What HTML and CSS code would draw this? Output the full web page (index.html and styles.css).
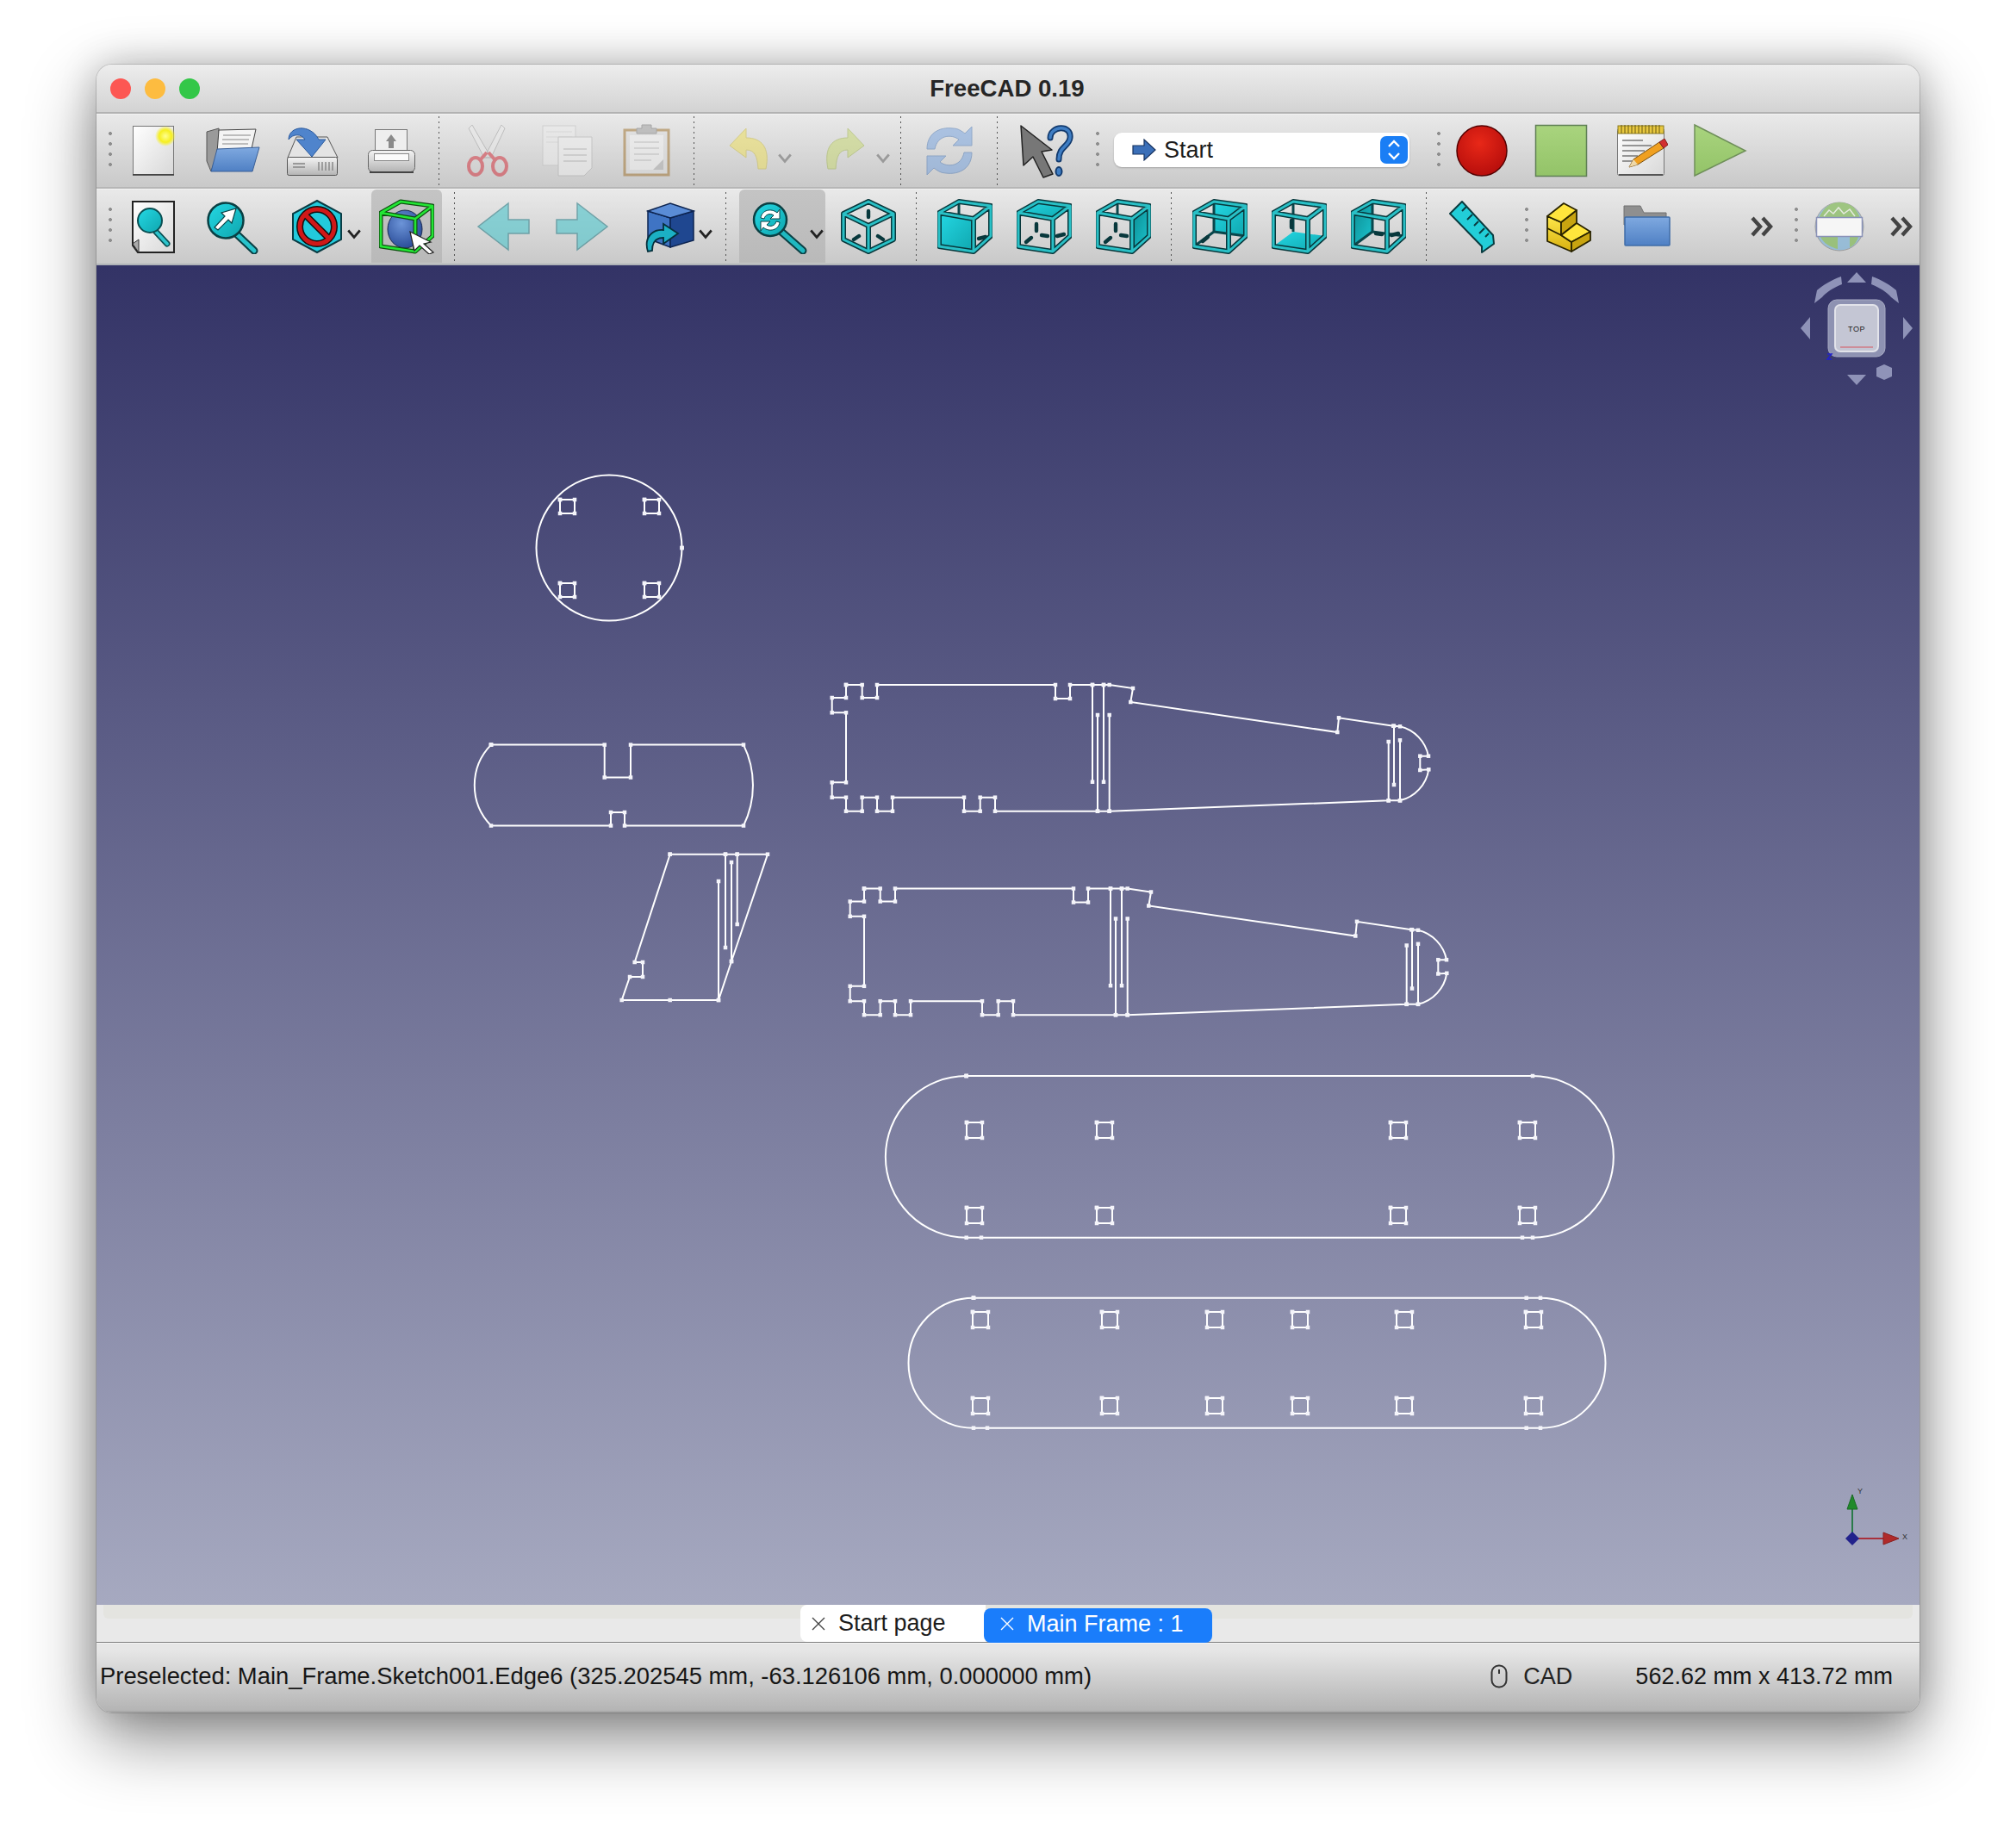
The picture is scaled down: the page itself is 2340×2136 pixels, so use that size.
FILE: index.html
```html
<!DOCTYPE html>
<html lang="en">
<head>
<meta charset="utf-8">
<title>FreeCAD 0.19</title>
<link rel="stylesheet" href="styles.css">
</head>
<body>
<svg class="defs" aria-hidden="true">
  <defs>
    <linearGradient id="gPage" x1="0" y1="0" x2="1" y2="1"><stop offset="0" stop-color="#fff"/><stop offset="1" stop-color="#d8d8d8"/></linearGradient>
    <radialGradient id="gGlow"><stop offset="0" stop-color="#ffff90"/><stop offset=".6" stop-color="#f6ef20"/><stop offset="1" stop-color="#f6ef20" stop-opacity="0"/></radialGradient>
    <linearGradient id="gBlue" x1="0" y1="0" x2="0" y2="1"><stop offset="0" stop-color="#7fa9e0"/><stop offset="1" stop-color="#4f80c4"/></linearGradient>
    <linearGradient id="gGrey" x1="0" y1="0" x2="0" y2="1"><stop offset="0" stop-color="#f4f4f4"/><stop offset="1" stop-color="#b4b4b4"/></linearGradient>
    <radialGradient id="gRed" cx=".45" cy=".35" r=".75"><stop offset="0" stop-color="#e82818"/><stop offset="1" stop-color="#b00a0a"/></radialGradient>
    <linearGradient id="gGreen" x1="0" y1="0" x2="0" y2="1"><stop offset="0" stop-color="#a9d47e"/><stop offset="1" stop-color="#93c368"/></linearGradient>
    <linearGradient id="gTeal" x1="0" y1="0" x2="1" y2="1"><stop offset="0" stop-color="#24d8e4"/><stop offset="1" stop-color="#0fa6ae"/></linearGradient>
    <linearGradient id="gTealD" x1="0" y1="0" x2="1" y2="1"><stop offset="0" stop-color="#0b8a90"/><stop offset="1" stop-color="#1cc6d0"/></linearGradient>
    <radialGradient id="gSphere" cx=".4" cy=".35" r=".8"><stop offset="0" stop-color="#6c94d8"/><stop offset="1" stop-color="#1e3f8c"/></radialGradient>
    <linearGradient id="gGold" x1="0" y1="0" x2="0" y2="1"><stop offset="0" stop-color="#ffe84a"/><stop offset="1" stop-color="#d8b010"/></linearGradient>

    <symbol id="new" viewBox="0 0 64 64">
      <rect x="8.5" y="3.5" width="47" height="56" fill="url(#gPage)" stroke="#777"/>
      <path d="M8 60h48" stroke="#333" stroke-width="1.5"/>
      <circle cx="46" cy="15" r="12" fill="url(#gGlow)"/>
    </symbol>
    <symbol id="open" viewBox="0 0 64 64">
      <path d="M2 10 L16 6 L16 30 L7 56 L2 44Z" fill="#9a9a9a" stroke="#555"/>
      <path d="M16 8 L59 7 L53 34 L14 34Z" fill="#f4f4f4" stroke="#444"/>
      <path d="M21 14h32M20 19h31M20 24h30" stroke="#aaa" stroke-width="1.5"/>
      <path d="M14 30 L63 28 L55 56 L7 56Z" fill="url(#gBlue)" stroke="#3a5f96"/>
    </symbol>
    <symbol id="save" viewBox="0 0 64 64">
      <path d="M14 16 H50 L62 40 H4Z" fill="#e4e4e4" stroke="#555"/>
      <rect x="3.5" y="39.5" width="58" height="21" rx="2" fill="url(#gGrey)" stroke="#555"/>
      <path d="M10 47h14M10 51h14" stroke="#999" stroke-width="2"/>
      <path d="M40 45v10M44 45v10M48 45v10M52 45v10M56 45v10" stroke="#888" stroke-width="1.5"/>
      <path d="M5 19 C5 3 30 0 40 19 H48 L32 39 L14 19 H24 C20 12 10 12 5 19Z" fill="#4f84cc" stroke="#2c5a9c"/>
    </symbol>
    <symbol id="print" viewBox="0 0 64 64">
      <rect x="13.5" y="7.5" width="37" height="30" fill="#eee" stroke="#777"/>
      <path d="M32 13 L38 21 H35 V29 H29 V21 H26Z" fill="#8a8a8a"/>
      <rect x="5.5" y="31.5" width="54" height="25" rx="5" fill="url(#gGrey)" stroke="#666"/>
      <rect x="12.5" y="35.5" width="40" height="8" fill="#fafafa" stroke="#888"/>
      <path d="M7 57h51" stroke="#444" stroke-width="2"/>
    </symbol>
    <symbol id="cut" viewBox="0 0 64 64">
      <g class="dim">
        <path d="M14 2 L36 40 L28 40 L10 6Z M48 2 L28 40 L36 40 L52 6Z" fill="#ececec" stroke="#999"/>
        <ellipse cx="18" cy="50" rx="8" ry="10" fill="none" stroke="#d21f2c" stroke-width="4"/>
        <ellipse cx="46" cy="50" rx="8" ry="10" fill="none" stroke="#d21f2c" stroke-width="4"/>
        <path d="M24 42 L31 34 M40 42 L33 34" stroke="#d21f2c" stroke-width="4"/>
      </g>
    </symbol>
    <symbol id="copy" viewBox="0 0 64 64">
      <g class="dim">
        <rect x="4" y="3" width="38" height="46" fill="#eee" stroke="#bbb"/>
        <path d="M8 10h30M8 16h30M8 22h30" stroke="#ccc"/>
        <path d="M22 16 H61 V52 L52 61 H22Z" fill="#f3f3f3" stroke="#aaa"/>
        <path d="M28 30h27M28 37h27M28 44h27" stroke="#b4b4b4" stroke-width="1.5"/>
      </g>
    </symbol>
    <symbol id="paste" viewBox="0 0 64 64">
      <g class="dim">
        <rect x="7" y="8" width="51" height="52" fill="#ddd" stroke="#9a6a20" stroke-width="3"/>
        <rect x="13" y="14" width="39" height="40" fill="#f5f5f5"/>
        <path d="M18 22h29M18 29h29M18 36h29M18 43h20" stroke="#bbb" stroke-width="1.5"/>
        <path d="M40 54 L52 42 V54Z" fill="#aaa"/>
        <path d="M21 12 V6 H27 V2 H38 V6 H44 V12Z" fill="#999" stroke="#666"/>
      </g>
    </symbol>
    <symbol id="undo" viewBox="0 0 64 64">
      <path class="dim" d="M30 6 L11 26 L30 40 V31 C40 31 43 38 44 53 H53 C58 28 48 17 30 17Z" fill="#f0e050" stroke="#c8b830"/>
    </symbol>
    <symbol id="redo" viewBox="0 0 64 64">
      <path class="dim" d="M34 6 L53 26 L34 40 V31 C24 31 21 38 20 53 H11 C6 28 16 17 34 17Z" fill="#c6d868" stroke="#9ab040"/>
    </symbol>
    <symbol id="refresh" viewBox="0 0 64 64">
      <g class="dim" fill="#6f9fe0" stroke="#3f6fb0">
        <path d="M6 30 C6 12 20 4 36 6 C42 6 46 9 50 12 L58 4 V26 H36 L43 19 C34 12 18 14 15 30Z"/>
        <path d="M58 34 C58 52 44 60 28 58 C22 58 18 55 14 52 L6 60 V38 H28 L21 45 C30 52 46 50 49 34Z"/>
      </g>
    </symbol>
    <symbol id="whats" viewBox="0 0 64 64">
      <path d="M3 3 L39 31 L27 33 L40 59 L29 63 L17 39 L6 49Z" fill="#777" stroke="#222" stroke-width="1.5" stroke-linejoin="round"/>
      <path d="M37 17 C37 3 62 1 60 17 C59 27 47 27 47 42" fill="none" stroke="#123a6e" stroke-width="7" stroke-linecap="round"/>
      <path d="M37 17 C37 3 62 1 60 17 C59 27 47 27 47 42" fill="none" stroke="#3f7ec4" stroke-width="3.5" stroke-linecap="round"/>
      <ellipse cx="47" cy="56" rx="3.5" ry="5" fill="#3f7ec4" stroke="#123a6e" stroke-width="2"/>
    </symbol>
    <symbol id="rec" viewBox="0 0 64 64"><circle cx="32" cy="32" r="29" fill="url(#gRed)" stroke="#500" stroke-width="1.5"/></symbol>
    <symbol id="stop" viewBox="0 0 64 64"><rect x="2.5" y="2.5" width="59" height="59" fill="url(#gGreen)" stroke="#5f7f55" stroke-width="1.5"/></symbol>
    <symbol id="macro" viewBox="0 0 64 64">
      <rect x="5.5" y="6.5" width="54" height="54" rx="2" fill="url(#gPage)" stroke="#777"/>
      <path d="M7 60h51" stroke="#555" stroke-width="2"/>
      <rect x="6" y="3" width="53" height="9" fill="#e8c840" stroke="#8a7a20"/>
      <path d="M10 2v10M14 2v10M18 2v10M22 2v10M26 2v10M30 2v10M34 2v10M38 2v10M42 2v10M46 2v10M50 2v10M54 2v10" stroke="#6a5a10"/>
      <path d="M11 20h24M11 26h34M11 32h26M11 38h18M11 44h14" stroke="#777" stroke-width="1.5"/>
      <path d="M19 51 L24 42 L54 22 L59 29 L29 48Z" fill="#f0a020" stroke="#7a5010"/>
      <path d="M54 22 L60 18 L64 25 L59 29Z" fill="#d23030" stroke="#802020"/>
      <path d="M19 51 L24 42 L29 48Z" fill="#eed8a8"/>
    </symbol>
    <symbol id="play" viewBox="0 0 64 64"><path d="M3 2 L62 32 L3 61Z" fill="url(#gGreen)" stroke="#6f8f5a" stroke-width="1.5"/></symbol>

    <symbol id="pzoom" viewBox="0 0 64 64">
      <path d="M8 3 H56 V62 H14 L8 54Z" fill="url(#gPage)" stroke="#222" stroke-width="2"/>
      <path d="M8 52 L15 47 V62Z" fill="#aaa" stroke="#333"/>
      <path d="M35 38 L48 52" stroke="#0a4f52" stroke-width="7" stroke-linecap="round"/>
      <path d="M35 38 L48 52" stroke="#2cc4cc" stroke-width="4" stroke-linecap="round"/>
      <circle cx="28" cy="25" r="14" fill="url(#gTeal)" stroke="#0a4f52" stroke-width="2"/>
    </symbol>
    <symbol id="zsel" viewBox="0 0 64 64">
      <path d="M37 41 L57 60" stroke="#0a4044" stroke-width="9" stroke-linecap="round"/>
      <path d="M37 41 L57 60" stroke="#28c4cc" stroke-width="5" stroke-linecap="round"/>
      <circle cx="24" cy="25" r="20.5" fill="url(#gTeal)" stroke="#0a4044" stroke-width="2.5"/>
      <path d="M36 11 L31 28 L27 24 L15 36 L11 33 L23 20 L19 16Z" fill="#fff" stroke="#0a4044" stroke-width="1.2"/>
    </symbol>
    <symbol id="nosign" viewBox="0 0 64 64">
      <path d="M32 2 L60 17 V47 L32 62 L4 47 V17Z" fill="#22cadc" stroke="#0a3c44" stroke-width="2"/>
      <circle cx="32" cy="32" r="20" fill="none" stroke="#111" stroke-width="8"/>
      <path d="M18 18 L46 46" stroke="#111" stroke-width="8"/>
      <circle cx="32" cy="32" r="20" fill="none" stroke="#d01818" stroke-width="5"/>
      <path d="M18 18 L46 46" stroke="#d01818" stroke-width="5"/>
    </symbol>

    <symbol id="hexf" viewBox="0 0 64 64">
      <path d="M2 16 L25 3 L62 8 V43 L42 61 L2 55Z M2 16 L42 23 V61 M42 23 L62 8"/>
    </symbol>
    <symbol id="cube" viewBox="0 0 64 64">
      <use href="#hexf" class="fr-o"/><use href="#hexf" class="fr-i"/>
    </symbol>

    <symbol id="boxsel" viewBox="0 0 64 64">
      <ellipse cx="30" cy="35" rx="20" ry="22" fill="url(#gSphere)" stroke="#1a2a50"/>
      <use href="#hexf" class="gr-o"/><use href="#hexf" class="gr-i"/>
      <path d="M36 38 L60 50 L52 52 L63 62 L58 64 L47 54 L41 60Z" fill="#fff" stroke="#222" stroke-width="1.2"/>
    </symbol>
    <symbol id="back" viewBox="0 0 64 64"><path class="dim2" d="M3 32 L38 5 V24 H62 V40 H38 V59Z" fill="#52c6cc" stroke="#2f7f88" stroke-width="1.5"/></symbol>
    <symbol id="fwd" viewBox="0 0 64 64"><path class="dim2" d="M61 32 L26 5 V24 H2 V40 H26 V59Z" fill="#52c6cc" stroke="#2f7f88" stroke-width="1.5"/></symbol>
    <symbol id="bluecube" viewBox="0 0 64 64">
      <path d="M8 14 L34 22 V56 L8 46Z" fill="#3f74c4" stroke="#0d2450" stroke-width="1.5"/>
      <path d="M34 22 L61 14 V48 L34 56Z" fill="#1f4790" stroke="#0d2450" stroke-width="1.5"/>
      <path d="M8 14 L34 5 L61 14 L34 22Z" fill="#5a8cd6" stroke="#0d2450" stroke-width="1.5"/>
      <path d="M8 61 C3 45 13 35 26 36 V29 L43 40 L26 52 V45 C18 45 13 50 13 60Z" fill="#1bb0c4" stroke="#06303c" stroke-width="1.8"/>
    </symbol>
    <symbol id="zrefresh" viewBox="0 0 64 64">
      <path d="M34 38 L59 60" stroke="#0a4044" stroke-width="9" stroke-linecap="round"/>
      <path d="M34 38 L59 60" stroke="#1fb8c0" stroke-width="5" stroke-linecap="round"/>
      <circle cx="21" cy="24" r="19" fill="url(#gTeal)" stroke="#0a4044" stroke-width="2.5"/>
      <path d="M10 22 C11 13 22 10 29 16 L32 12 V23 H21 L25 19 C21 16 15 18 14 23Z M32 27 C31 36 20 39 13 33 L10 37 V26 H21 L17 30 C21 33 27 31 28 26Z" fill="#fff" stroke="#0a4044"/>
    </symbol>
    <symbol id="iso" viewBox="0 0 64 64">
      <path d="M32 14v7M15 47l6-4M49 47l-6-4" class="tick"/>
      <path d="M32 3 L61 17 V47 L32 61 L3 47 V17Z M3 17 L32 31 L61 17 M32 31 V61" class="fr-o"/>
      <path d="M32 3 L61 17 V47 L32 61 L3 47 V17Z M3 17 L32 31 L61 17 M32 31 V61" class="fr-i"/>
    </symbol>
    <symbol id="vfront" viewBox="0 0 64 64">
      <path d="M25 3 V20" class="thin"/>
      <path d="M48 46 L56 44" class="tick"/>
      <path d="M2 16 L42 23 V61 L2 55Z" fill="url(#gTeal)"/>
      <use href="#cube"/>
    </symbol>
    <symbol id="vtop" viewBox="0 0 64 64">
      <path d="M2 16 L25 3 L62 8 L42 23Z" fill="url(#gTeal)"/>
      <path d="M23 29 V37 M29 42 L36 43 M11 50 L17 45 M47 43 L55 41" class="tick"/>
      <use href="#cube"/>
    </symbol>
    <symbol id="vright" viewBox="0 0 64 64">
      <path d="M25 3 V20" class="thin"/>
      <path d="M42 23 L62 8 V43 L42 61Z" fill="url(#gTealD)"/>
      <path d="M23 29 V37 M29 42 L36 43 M11 50 L17 45" class="tick"/>
      <use href="#cube"/>
    </symbol>
    <symbol id="vrear" viewBox="0 0 64 64">
      <path d="M25 3 L62 8 V43 L25 38Z" fill="url(#gTeal)"/>
      <path d="M25 3 V38 M25 38 L62 43 M25 38 L2 55" class="thin"/>
      <path d="M12 49 L18 44" class="tick"/>
      <use href="#cube"/>
    </symbol>
    <symbol id="vbottom" viewBox="0 0 64 64">
      <path d="M2 55 L25 38 L62 43 L42 61Z" fill="url(#gTeal)"/>
      <path d="M25 3 V38" class="thin"/>
      <path d="M23 25 V33" class="tick"/>
      <use href="#cube"/>
    </symbol>
    <symbol id="vleft" viewBox="0 0 64 64">
      <path d="M2 16 L25 3 V38 L2 55Z" fill="url(#gTealD)"/>
      <path d="M25 3 V38 M25 38 L62 43 M25 38 L2 55" class="thin"/>
      <path d="M29 40 L36 41 M47 42 L55 40" class="tick"/>
      <use href="#cube"/>
    </symbol>
    <symbol id="ruler" viewBox="0 0 64 64">
      <path d="M21 3 L7 17 L44 55 L44 62 L58 52 L57 42Z" fill="#22ced8" stroke="#0a3c40" stroke-width="2" stroke-linejoin="round"/>
      <path d="M26 9l-5 5M33 18l-6 6M40 26l-5 5M47 34l-6 6M52 40l-4 4" stroke="#0a3c40" stroke-width="2"/>
    </symbol>
    <symbol id="blocks" viewBox="0 0 64 64">
      <g stroke="#2a2400" stroke-width="1.8" stroke-linejoin="round">
        <path d="M8 20 L24 27 V42 L36 50 V61 L8 49Z" fill="url(#gGold)"/>
        <path d="M24 27 L42 13 V28 L24 42Z" fill="#c8a410"/>
        <path d="M8 20 L27 5 L42 13 L24 27Z" fill="#ffe53c"/>
        <path d="M24 42 L42 28 L58 38 L36 50Z" fill="#ffe53c"/>
        <path d="M36 50 L58 38 V48 L36 61Z" fill="#c8a410"/>
        <path d="M8 34 L24 42" fill="none"/>
      </g>
    </symbol>
    <symbol id="folder" viewBox="0 0 64 64">
      <path d="M5 8 H24 L28 16 H54 V30 H5Z" fill="#8f8f8f" stroke="#707070"/>
      <rect x="6" y="21" width="52" height="33" rx="1" fill="url(#gBlue)" stroke="#3f6ca8" stroke-width="1.5"/>
    </symbol>
    <symbol id="globe" viewBox="0 0 64 64">
      <g class="dim3">
        <circle cx="32" cy="32" r="28" fill="#82b4d8" stroke="#8a8a8a"/>
        <path d="M8 22 C14 9 22 4 32 4 C44 4 52 10 56 22Z M10 44 H30 V58 C22 56 14 52 10 44Z M44 44 H54 C52 50 49 54 44 56Z" fill="#84ba5c"/>
        <path d="M14 20 L20 13 L25 17 L31 10 L37 17 L44 12 L50 20" fill="none" stroke="#e8efe0" stroke-width="1.5"/>
      </g>
      <rect x="5.5" y="21.5" width="53" height="22" fill="#f6f6f6" stroke="#8a92b8" stroke-width="1.5"/>
    </symbol>
    <symbol id="more" viewBox="0 0 30 26">
      <path d="M3 3 L12 13 L3 23 M15 3 L24 13 L15 23" fill="none" stroke="#444" stroke-width="4.4"/>
    </symbol>
    <symbol id="chev" viewBox="0 0 16 12"><path d="M2 2 L8 9 L14 2" fill="none" stroke="currentColor" stroke-width="2.4"/></symbol>
    <symbol id="close" viewBox="0 0 16 16"><path d="M1 1 L15 15 M15 1 L1 15" stroke="currentColor" stroke-width="1.4"/></symbol>
  </defs>
</svg>

<main class="window">
  <header class="titlebar">
    <div class="lights"><span class="light red"></span><span class="light amber"></span><span class="light green"></span></div>
    <h1 class="title">FreeCAD 0.19</h1>
  </header>

  <div class="toolbar tb1">
    <span class="grip"></span>
    <span class="s"><svg class="i"><use href="#new"/></svg></span>
    <span class="s"><svg class="i"><use href="#open"/></svg></span>
    <span class="s"><svg class="i"><use href="#save"/></svg></span>
    <span class="s"><svg class="i"><use href="#print"/></svg></span>
    <span class="sep"></span>
    <span class="s"><svg class="i"><use href="#cut"/></svg></span>
    <span class="s"><svg class="i"><use href="#copy"/></svg></span>
    <span class="s"><svg class="i"><use href="#paste"/></svg></span>
    <span class="sep sep-wide"></span>
    <span class="s m off undo-btn"><svg class="i"><use href="#undo"/></svg><svg class="c"><use href="#chev"/></svg></span>
    <span class="s m off redo-btn"><svg class="i"><use href="#redo"/></svg><svg class="c"><use href="#chev"/></svg></span>
    <span class="sep"></span>
    <span class="s"><svg class="i"><use href="#refresh"/></svg></span>
    <span class="sep"></span>
    <span class="s"><svg class="i"><use href="#whats"/></svg></span>
    <span class="grip grip-wb"></span>
    <div class="combo">
      <svg class="combo-arrow" viewBox="0 0 28 26"><path d="M1 8 H14 V1 L27 13 L14 25 V18 H1Z" fill="#3b6fb8" stroke="#17325e" stroke-width="1.2"/></svg>
      <span class="combo-text">Start</span>
      <span class="stepper"><svg viewBox="0 0 32 32"><path d="M10 12 L16 6 L22 12 M10 20 L16 26 L22 20" fill="none" stroke="#fff" stroke-width="2.4"/></svg></span>
    </div>
    <span class="grip grip-macro"></span>
    <span class="s"><svg class="i"><use href="#rec"/></svg></span>
    <span class="s"><svg class="i"><use href="#stop"/></svg></span>
    <span class="s"><svg class="i"><use href="#macro"/></svg></span>
    <span class="s"><svg class="i"><use href="#play"/></svg></span>
  </div>

  <div class="toolbar tb2">
    <span class="grip"></span>
    <span class="s"><svg class="i"><use href="#pzoom"/></svg></span>
    <span class="s"><svg class="i"><use href="#zsel"/></svg></span>
    <span class="s m nosign-btn"><svg class="i"><use href="#nosign"/></svg><svg class="c"><use href="#chev"/></svg></span>
    <span class="s active boxsel-btn"><svg class="i"><use href="#boxsel"/></svg></span>
    <span class="sep sep-box"></span>
    <span class="s"><svg class="i"><use href="#back"/></svg></span>
    <span class="s"><svg class="i"><use href="#fwd"/></svg></span>
    <span class="s m cube-btn"><svg class="i"><use href="#bluecube"/></svg><svg class="c"><use href="#chev"/></svg></span>
    <span class="sep sep-cube"></span>
    <span class="s m active zr-btn"><svg class="i"><use href="#zrefresh"/></svg><svg class="c"><use href="#chev"/></svg></span>
    <span class="s iso-btn"><svg class="i"><use href="#iso"/></svg></span>
    <span class="sep"></span>
    <span class="s"><svg class="i"><use href="#vfront"/></svg></span>
    <span class="s"><svg class="i"><use href="#vtop"/></svg></span>
    <span class="s"><svg class="i"><use href="#vright"/></svg></span>
    <span class="sep"></span>
    <span class="s"><svg class="i"><use href="#vrear"/></svg></span>
    <span class="s"><svg class="i"><use href="#vbottom"/></svg></span>
    <span class="s"><svg class="i"><use href="#vleft"/></svg></span>
    <span class="sep sep-ruler"></span>
    <span class="s"><svg class="i"><use href="#ruler"/></svg></span>
    <span class="grip grip-part"></span>
    <span class="s"><svg class="i"><use href="#blocks"/></svg></span>
    <span class="s"><svg class="i"><use href="#folder"/></svg></span>
    <svg class="more more-a"><use href="#more"/></svg>
    <span class="grip grip-web"></span>
    <span class="s web-btn"><svg class="i"><use href="#globe"/></svg></span>
    <svg class="more more-b"><use href="#more"/></svg>
  </div>

  <section class="viewport">
    <svg class="scene" viewBox="112 308 2116 1555">
      <defs>
        <marker id="v" markerUnits="userSpaceOnUse" markerWidth="6" markerHeight="6" refX="3" refY="3"><rect x=".75" y=".75" width="4.5" height="4.5" fill="#f4f4fa"/></marker>
        <path id="wing" d="M982 795 H1000.7 V810 H1018 V795 H1225 V811 H1242 V795 H1268 H1281 H1287.7 L1315 799 L1312.3 815 L1552.3 850 L1554 833.3 L1617.3 842.7 L1625 843.3 A44 44 0 0 1 1658 877.7 H1648.3 V894 L1658.3 893.3 A44 44 0 0 1 1625 929.3 H1611.7 L1287.7 941.7 H1274 H1155 V925.7 H1137.7 V941.7 H1119 V925.7 H1036 V941.7 H1018 V925.7 H1000.7 V941.7 H982 V925.7 H965.7 V908.3 H982 V827.3 H965.7 V810 H982Z M1268 795 V907.7 M1281 795 V907.7 M1274 830 V941.7 M1287.7 830 V941.7 M1611.7 861 V929.3 M1618 842.7 V911 M1625 859.3 V929.3"/>
      </defs>
      <g class="sk" marker-start="url(#v)" marker-mid="url(#v)" marker-end="url(#v)">
        <circle cx="707" cy="636" r="84.5"/>
        <path d="M791.5 636h.1"/>
        <path d="M650 580h17v16h-17z M748 580h17v16h-17z M650 677h17v16h-17z M748 677h17v16h-17z"/>
        <path d="M570 864.6 H701.7 V902.5 H732 V864.6 H863 A106 106 0 0 1 863 958.5 H725 V943 H709 V958.5 H570 A67 67 0 0 1 570 864.6Z"/>
        <path d="M777.7 991.7 H842 H855.7 H891 L849 1116 L834 1161 H777.7 H721.7 L731 1134 H746 V1117 H736.7Z M834 1023 V1161 M842 991.7 V1100 M849 1001 V1116 M855.7 991.7 V1073"/>
        <use href="#wing"/>
        <use href="#wing" class="wing-b"/>
        <path d="M1121.7 1249 H1779 A93.8 93.8 0 0 1 1779 1436.7 H1767 H1139 H1121.7 A93.8 93.8 0 0 1 1121.7 1249Z"/>
        <path d="M1122 1303h18v18h-18z M1273 1303h18v18h-18z M1614 1303h18v18h-18z M1764 1303h18v18h-18z M1122 1402h18v18h-18z M1273 1402h18v18h-18z M1614 1402h18v18h-18z M1764 1402h18v18h-18z"/>
        <path d="M1130 1506.7 H1771.7 H1788 A75.5 75.5 0 0 1 1788 1657.7 H1771.7 H1146 H1130 A75.5 75.5 0 0 1 1130 1506.7Z"/>
        <path d="M1129 1523h18v18h-18z M1279 1523h18v18h-18z M1401 1523h18v18h-18z M1500 1523h18v18h-18z M1621 1523h18v18h-18z M1771 1523h18v18h-18z M1129 1623h18v18h-18z M1279 1623h18v18h-18z M1401 1623h18v18h-18z M1500 1623h18v18h-18z M1621 1623h18v18h-18z M1771 1623h18v18h-18z"/>
      </g>

      <g class="navcube">
        <path class="nc" d="M2155 316 L2166 328 H2144Z M2090 381 L2101 368 V394Z M2220 381 L2209 368 V394Z M2155 447 L2144 435 H2166Z"/>
        <path class="nc" d="M2106 352 L2109 337 C2116 331 2126 325 2137 321 L2138 330 C2128 334 2120 339 2115 345Z M2204 352 L2201 337 C2194 331 2184 325 2173 321 L2172 330 C2182 334 2190 339 2195 345Z"/>
        <path class="nc" d="M2187 423 L2196 427 V437 L2187 441 L2178 437 V427Z"/>
        <rect class="nc-body" x="2122" y="348" width="66" height="66" rx="10"/>
        <rect class="nc-face" x="2130" y="354" width="50" height="54" rx="6"/>
        <path class="nc-edge" d="M2136 403 H2174"/>
        <path class="nc-blue" d="M2121 411 h5 l-5 6 h5"/>
        <text class="nc-text" x="2155" y="385">TOP</text>
      </g>

      <g class="axes">
        <path class="ax-y" d="M2150 1785 V1750"/>
        <path class="ax-yh" d="M2150 1735 L2156 1752 H2144Z"/>
        <path class="ax-x" d="M2150 1786 H2190"/>
        <path class="ax-xh" d="M2204 1786 L2186 1779 V1793Z"/>
        <path class="ax-z" d="M2150 1778 L2158 1786 L2150 1794 L2142 1786Z"/>
        <text class="ax-t" x="2156" y="1734">Y</text>
        <text class="ax-t" x="2208" y="1787">X</text>
      </g>
    </svg>
  </section>

  <nav class="tabbar">
    <div class="tab tab-off"><svg class="x"><use href="#close"/></svg>Start page</div>
    <div class="tab tab-on"><svg class="x"><use href="#close"/></svg>Main Frame : 1</div>
  </nav>

  <footer class="status">
    <span class="msg">Preselected: Main_Frame.Sketch001.Edge6 (325.202545 mm, -63.126106 mm, 0.000000 mm)</span>
    <svg class="mouse" viewBox="0 0 20 28"><rect x="1.5" y="1.5" width="17" height="25" rx="8" fill="none" stroke="#333" stroke-width="2"/><path d="M10 6v5" stroke="#333" stroke-width="2"/></svg>
    <span class="cad">CAD</span>
    <span class="dims">562.62 mm x 413.72 mm</span>
  </footer>
</main>
</body>
</html>
```
FILE: styles.css
```css
* { box-sizing: border-box; }
html, body { margin: 0; padding: 0; }
body {
  width: 2340px;
  height: 2136px;
  background: #fff;
  padding: 75px 0 0 112px;
  font-family: "Liberation Sans", Arial, sans-serif;
  overflow: hidden;
}
.defs { position: absolute; width: 0; height: 0; }

.window {
  width: 2116px;
  height: 1913px;
  display: flex;
  flex-direction: column;
  border-radius: 18px;
  overflow: hidden;
  background: #e8e8e8;
  box-shadow: 0 0 0 1px rgba(0,0,0,.14), 0 30px 80px rgba(0,0,0,.46), 0 0 44px rgba(0,0,0,.2);
}

.titlebar {
  height: 57px;
  flex: none;
  display: flex;
  align-items: center;
  background: linear-gradient(#ededed, #d3d3d3);
  border-bottom: 2px solid #b2b2b2;
  position: relative;
}
.lights { display: flex; gap: 16px; margin-left: 16px; }
.light { width: 24px; height: 24px; border-radius: 50%; }
.red { background: #fc5753; }
.amber { background: #fdbc40; }
.green { background: #33c748; }
.title {
  position: absolute;
  left: 0; right: 0;
  top: 12px;
  margin: 0;
  padding-right: 2px;
  text-align: center;
  font-size: 27.6px;
  line-height: 32px;
  font-weight: 700;
  color: #262626;
}

.toolbar {
  display: flex;
  align-items: center;
  flex: none;
  padding-left: 14px;
  background: linear-gradient(#e9e9e9, #c9c9c9);
}
.tb1 { height: 87px; border-top: 1px solid #f2f2f2; border-bottom: 2px solid #b6b6b6; }
.tb2 { height: 89px; border-top: 1px solid #f2f2f2; border-bottom: 2px solid #b0b4b8; padding-bottom: 1px; }

.grip {
  flex: none;
  width: 4px;
  height: 52px;
  margin-right: 2px;
  background: radial-gradient(circle, #8e8e8e 1.8px, transparent 2.2px) 0 0 / 4px 12px repeat-y;
}
.grip-wb { margin: 0 17px 0 12px; }
.grip-macro { margin: 0 2px 0 32px; }
.grip-part { margin: 0 0 0 16px; }
.grip-web { margin: 0 0 0 22px; }

.sep {
  flex: none;
  width: 1px;
  height: 80px;
  margin: 0 10px 0 9px;
  background: repeating-linear-gradient(#555 0 2px, transparent 2px 6px);
}
.sep-wide { margin-right: 16px; }
.sep-box { margin: 0 10px 0 14px; }
.sep-cube { margin: 0 15px 0 6px; }
.sep-ruler { margin-right: 6px; }

.s {
  flex: none;
  width: 92px;
  height: 64px;
  display: flex;
  align-items: center;
  justify-content: center;
}
.i { width: 64px; height: 64px; flex: none; display: block; overflow: visible; }

.m { width: 104px; justify-content: flex-start; padding-left: 14px; position: relative; }
.c { width: 18px; height: 14px; margin-left: 2px; margin-top: 18px; color: #222; flex: none; }
.off .c { color: #8c8c8c; opacity: .8; }
.undo-btn { margin-right: 10px; }
.redo-btn { margin-right: -4px; }
.nosign-btn { margin-left: 6px; width: 109px; }
.cube-btn { margin-left: 8px; width: 106px; }
.zr-btn { width: 100px; padding-left: 15px; }
.iso-btn { margin-left: 4px; }

.active {
  height: 85px;
  background: linear-gradient(#c4c4c4, #b9b9b9);
  border-radius: 6px 6px 0 0;
  align-self: flex-end;
}
.boxsel-btn { width: 82px; }

.more { width: 30px; height: 26px; flex: none; }
.more-a { margin-left: 73px; }
.more-b { margin-left: 12px; }
.web-btn { margin-left: 2px; }

.dim { opacity: .48; }
.dim2 { opacity: .62; }
.dim3 { opacity: .72; }

.fr-o, .fr-i, .gr-o, .gr-i { fill: none; stroke-linejoin: round; }
.fr-o { stroke: #08383c; stroke-width: 6; }
.fr-i { stroke: #29c0c6; stroke-width: 3; }
.gr-o { stroke: #0f4f10; stroke-width: 5; }
.gr-i { stroke: #22e634; stroke-width: 2.6; }
.tick { fill: none; stroke: #08383c; stroke-width: 4.4; stroke-linecap: round; }
.thin { fill: none; stroke: #0a474c; stroke-width: 3; }

.combo {
  flex: none;
  width: 343px;
  height: 40px;
  margin-bottom: 2px;
  background: #fff;
  border-radius: 9px;
  display: flex;
  align-items: center;
  padding-left: 21px;
  box-shadow: 0 1px 2px rgba(0,0,0,.22);
}
.combo-arrow { width: 28px; height: 26px; flex: none; }
.combo-text { margin-left: 9px; font-size: 27px; color: #1c1c1c; }
.stepper {
  margin-left: auto;
  margin-right: 2px;
  width: 32px;
  height: 32px;
  border-radius: 7px;
  background: #1a7ef5;
  display: block;
}
.stepper svg { display: block; width: 32px; height: 32px; }

.viewport {
  flex: none;
  height: 1555px;
  background: linear-gradient(#333366, #a6a9c0);
}
.scene { display: block; width: 2116px; height: 1555px; }
.sk { fill: none; stroke: #fff; stroke-width: 2; }
.wing-b { transform: translate(21px, 236.5px); }

.nc { fill: #8f93b8; }
.nc-body { fill: #8e92b2; stroke: #a8abc4; }
.nc-face { fill: #c4c6d4; stroke: #e2e3ea; stroke-width: 2; }
.nc-edge { stroke: #d07a86; stroke-width: 1.4; }
.nc-blue { fill: none; stroke: #2222cc; stroke-width: 1.5; }
.nc-text { font-size: 9px; fill: #222; text-anchor: middle; letter-spacing: .5px; font-family: "Liberation Sans", sans-serif; }

.ax-y { stroke: #2a7a4a; stroke-width: 2; }
.ax-yh { fill: #208a2a; stroke: #1a6a24; }
.ax-x { stroke: #a8303c; stroke-width: 2; }
.ax-xh { fill: #b02a2a; stroke: #8a2020; }
.ax-z { fill: #22228c; }
.ax-t { font-size: 9px; fill: #333; font-family: "Liberation Sans", sans-serif; }

.tabbar {
  flex: none;
  height: 44px;
  display: flex;
  align-items: stretch;
  padding-left: 817px;
  background: #e9e9e9;
  border-bottom: 1px solid #7e7e7e;
  position: relative;
}
.tabbar::before {
  content: "";
  position: absolute;
  left: 8px;
  right: 8px;
  top: 0;
  height: 16px;
  background: #e4e4e0;
  border-radius: 0 0 6px 6px;
}
.tab {
  position: relative;
  display: flex;
  align-items: center;
  font-size: 27px;
  white-space: nowrap;
}
.x { width: 16px; height: 16px; flex: none; }
.tab-off {
  width: 215px;
  padding-left: 13px;
  gap: 15px;
  background: #fff;
  color: #1c1c1c;
  border-radius: 8px 0 0 8px;
}
.tab-off .x { color: #444; }
.tab-on {
  width: 265px;
  margin-left: -2px;
  margin-top: 4px;
  margin-bottom: -1px;
  padding: 0 0 4px 19px;
  gap: 15px;
  background: #1a7dfb;
  color: #fff;
  border-radius: 8px;
}

.status {
  flex: none;
  height: 81px;
  display: flex;
  align-items: center;
  padding: 0 31px 2px 4px;
  font-size: 27px;
  color: #161616;
  background: linear-gradient(#e6e6e6 10%, #b4b4b4);
  border-top: 1px solid #f4f4f4;
  border-bottom: 2px solid #a8a8a8;
}
.msg { white-space: nowrap; font-size: 27.4px; }
.mouse { width: 20px; height: 28px; margin-left: auto; flex: none; }
.cad { margin-left: 18px; color: #222; }
.dims { margin-left: 73px; white-space: nowrap; }
```
